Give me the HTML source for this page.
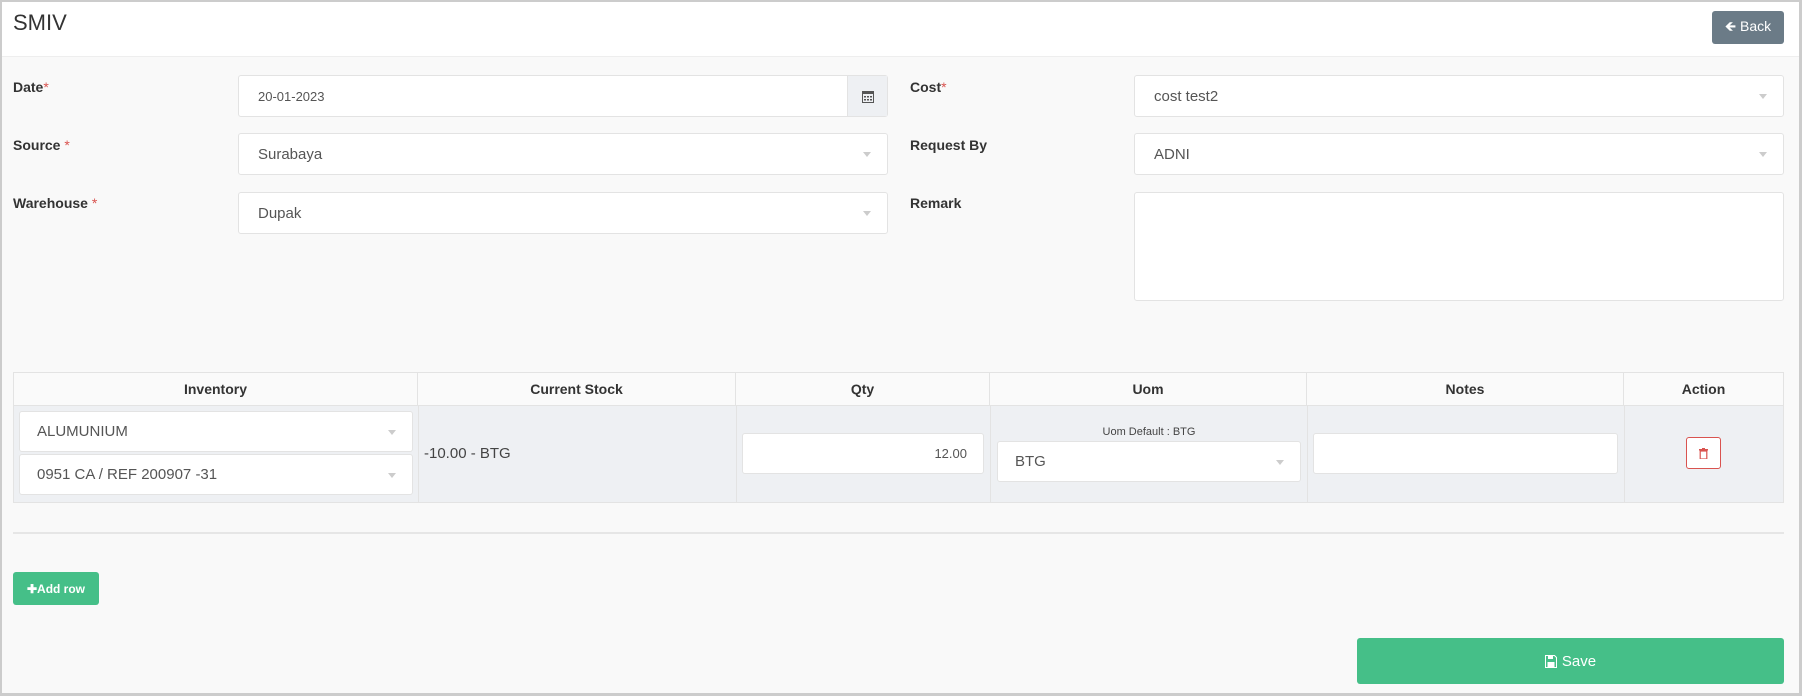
<!DOCTYPE html>
<html><head><meta charset="utf-8"><style>
*{box-sizing:border-box;margin:0;padding:0}
body{width:1802px;height:696px;background:#fff;font-family:"Liberation Sans",sans-serif;color:#333;position:relative;overflow:hidden}
.frame{position:absolute;left:0;top:0;width:1802px;height:696px;border:2px solid #ccc;border-right-width:3px;border-bottom-width:3px}
.hdr{position:absolute;left:2px;top:2px;width:1797px;height:55px;background:#fff;border-bottom:1px solid #eee}
.body{position:absolute;left:2px;top:57px;width:1797px;height:636px;background:#f9f9f9}
.a{position:absolute}
.lbl{position:absolute;font-size:14px;font-weight:bold;color:#333}
.lbl i{color:#d9534f;font-style:normal;font-weight:normal}
.inp{position:absolute;background:#fff;border:1px solid #e3e3e3;border-radius:3px;font-size:15px;color:#555;padding-left:19px;display:flex;align-items:center}
.caret{position:absolute;right:16px;top:50%;margin-top:-2px;border-left:4px solid transparent;border-right:4px solid transparent;border-top:5px solid #ccc}
.th{position:absolute;top:372px;height:33px;font-size:14px;font-weight:bold;color:#333;display:flex;align-items:center;justify-content:center;border-right:1px solid #e3e3e3}
.btn{position:absolute;color:#fff;display:flex;align-items:center;justify-content:center;border-radius:3px}
</style></head><body>
<div class="hdr"></div>
<div class="body"></div>
<div class="frame"></div>
<div class="a" style="left:13px;top:10px;font-size:22px;color:#333">SMIV</div>
<div class="btn" style="left:1712px;top:11px;width:72px;height:33px;background:#6b7b87;font-size:14px">&#129144; Back</div>

<div class="lbl" style="left:13px;top:79px">Date<i>*</i></div>
<div class="inp" style="left:238px;top:75px;width:650px;height:42px;font-size:13px">20-01-2023
<div class="a" style="right:0;top:0;width:40px;height:40px;background:#eef0f3;border-left:1px solid #e3e3e3;display:flex;align-items:center;justify-content:center"><svg width="12" height="13" viewBox="0 0 12 13"><rect x="0.5" y="1.5" width="11" height="11" fill="none" stroke="#555"/><rect x="0" y="1" width="12" height="3" fill="#555"/><g fill="#555"><rect x="2" y="6" width="2" height="1.5"/><rect x="5" y="6" width="2" height="1.5"/><rect x="8" y="6" width="2" height="1.5"/><rect x="2" y="9" width="2" height="1.5"/><rect x="5" y="9" width="2" height="1.5"/><rect x="8" y="9" width="2" height="1.5"/></g></svg></div></div>
<div class="lbl" style="left:13px;top:137px">Source <i>*</i></div>
<div class="inp" style="left:238px;top:133px;width:650px;height:42px">Surabaya<span class="caret"></span></div>
<div class="lbl" style="left:13px;top:195px">Warehouse <i>*</i></div>
<div class="inp" style="left:238px;top:192px;width:650px;height:42px">Dupak<span class="caret"></span></div>

<div class="lbl" style="left:910px;top:79px">Cost<i>*</i></div>
<div class="inp" style="left:1134px;top:75px;width:650px;height:42px">cost test2<span class="caret"></span></div>
<div class="lbl" style="left:910px;top:137px">Request By</div>
<div class="inp" style="left:1134px;top:133px;width:650px;height:42px">ADNI<span class="caret"></span></div>
<div class="lbl" style="left:910px;top:195px">Remark</div>
<div class="inp" style="left:1134px;top:192px;width:650px;height:109px"></div>

<div class="a" style="left:13px;top:372px;width:1771px;height:131px;border:1px solid #e3e3e3;background:#fafafa"></div>
<div class="a" style="left:14px;top:405px;width:1769px;height:97px;background:#eef0f3;border-top:1px solid #e3e3e3"></div>
<div class="th" style="left:14px;width:404px">Inventory</div>
<div class="th" style="left:418px;width:318px">Current Stock</div>
<div class="th" style="left:736px;width:254px">Qty</div>
<div class="th" style="left:990px;width:317px">Uom</div>
<div class="th" style="left:1307px;width:317px">Notes</div>
<div class="th" style="left:1624px;width:159px;border-right:none">Action</div>
<div class="a" style="left:418px;top:405px;width:1px;height:97px;background:#e3e3e3"></div>
<div class="a" style="left:736px;top:405px;width:1px;height:97px;background:#e3e3e3"></div>
<div class="a" style="left:990px;top:405px;width:1px;height:97px;background:#e3e3e3"></div>
<div class="a" style="left:1307px;top:405px;width:1px;height:97px;background:#e3e3e3"></div>
<div class="a" style="left:1624px;top:405px;width:1px;height:97px;background:#e3e3e3"></div>

<div class="inp" style="left:19px;top:411px;width:394px;height:41px;padding-left:17px">ALUMUNIUM<span class="caret"></span></div>
<div class="inp" style="left:19px;top:454px;width:394px;height:41px;padding-left:17px">0951 CA / REF 200907 -31<span class="caret"></span></div>
<div class="a" style="left:424px;top:445px;font-size:15px;color:#444">-10.00 - BTG</div>
<div class="inp" style="left:742px;top:433px;width:242px;height:41px;justify-content:flex-end;padding-right:16px;font-size:13px">12.00</div>
<div class="a" style="left:997px;top:426px;width:304px;text-align:center;font-size:11px;color:#444">Uom Default : BTG</div>
<div class="inp" style="left:997px;top:441px;width:304px;height:41px;padding-left:17px">BTG<span class="caret"></span></div>
<div class="inp" style="left:1313px;top:433px;width:305px;height:41px"></div>
<div class="a" style="left:1686px;top:437px;width:35px;height:32px;border:1px solid #d9534f;border-radius:3px;background:#fff;display:flex;align-items:center;justify-content:center"><svg width="9" height="11" viewBox="0 0 9 11"><rect x="0" y="1" width="9" height="1.5" fill="#d9534f"/><rect x="3" y="0" width="3" height="1.5" fill="#d9534f"/><rect x="1.2" y="3" width="6.6" height="8" fill="none" stroke="#d9534f" stroke-width="1.2"/></svg></div>

<div class="a" style="left:13px;top:532px;width:1771px;height:2px;background:#e6e6e6"></div>
<div class="btn" style="left:13px;top:572px;width:86px;height:33px;background:#45bf88;font-size:12px;font-weight:bold">&#10010;Add row</div>
<div class="btn" style="left:1357px;top:638px;width:427px;height:46px;background:#45bf88;font-size:15px"><svg width="12" height="13" viewBox="0 0 12 13" style="margin-right:5px"><path d="M0.5 0.5h9l2 2v10h-11z" fill="none" stroke="#fff"/><rect x="3" y="1" width="5" height="3" fill="#fff"/><rect x="2.5" y="7" width="7" height="5" fill="#fff"/></svg>Save</div>
</body></html>
